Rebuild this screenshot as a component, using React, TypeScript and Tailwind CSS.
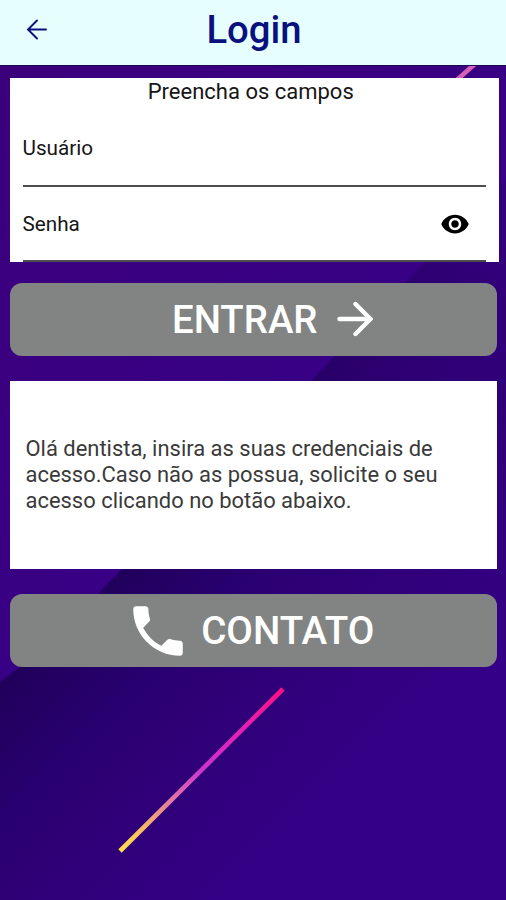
import { MdPhone, MdVisibility } from "react-icons/md"

function Background() {
  return (
    <svg className="absolute inset-0 -z-10 h-full w-full" viewBox="0 0 506 900" preserveAspectRatio="none">
      <defs>
        <linearGradient id="upper" x1="0" y1="65" x2="300" y2="365" gradientUnits="userSpaceOnUse">
          <stop offset="0" stopColor="#3b007c" />
          <stop offset="1" stopColor="#380084" />
        </linearGradient>
        <linearGradient id="lower" x1="60" y1="620" x2="300" y2="860" gradientUnits="userSpaceOnUse">
          <stop offset="0" stopColor="#20005a" />
          <stop offset="0.3" stopColor="#290070" />
          <stop offset="0.6" stopColor="#30007a" />
          <stop offset="1" stopColor="#350088" />
        </linearGradient>
        <linearGradient id="fade" x1="150" y1="540" x2="480" y2="210" gradientUnits="userSpaceOnUse">
          <stop offset="0" stopColor="#32007a" stopOpacity="0" />
          <stop offset="0.5" stopColor="#32007a" stopOpacity="0.4" />
          <stop offset="0.85" stopColor="#32007a" stopOpacity="0.8" />
          <stop offset="1" stopColor="#34007c" />
        </linearGradient>
        <linearGradient id="streak" x1="120" y1="851" x2="283" y2="689" gradientUnits="userSpaceOnUse">
          <stop offset="0" stopColor="#ffe04a" />
          <stop offset="0.15" stopColor="#f5b868" />
          <stop offset="0.35" stopColor="#dd6aae" />
          <stop offset="0.5" stopColor="#c935cc" />
          <stop offset="0.75" stopColor="#e51fb4" />
          <stop offset="1" stopColor="#ff0f84" />
        </linearGradient>
      </defs>
      <rect width="506" height="900" fill="url(#upper)" />
      <path d="M0 682L20 667L97 595L122 569L312 380L335 356L424 263L506 181V900H0Z" fill="url(#lower)" />
      <path d="M97 595L122 569L312 380L335 356L424 263L506 181V600H97Z" fill="url(#fade)" />
      <path d="M120 851L283 689" stroke="url(#streak)" strokeWidth="4.6" />
      <path d="M440 95L476 63" stroke="#d45fb5" strokeWidth="4.6" />
    </svg>
  )
}

export default function App() {
  return (
    <div className="relative isolate flex h-[900px] w-[506px] flex-col overflow-hidden font-['Roboto',sans-serif]">
      <Background />

      <header className="grid h-[66px] grid-cols-[1fr_auto_1fr] items-center border-b border-[#1d0850] bg-[#e7feff] text-[#09117e]">
        <button className="ml-[26px] w-[22px] pb-[7px]" aria-label="Voltar">
          <svg
            className="h-[22px] w-[22px]"
            viewBox="0 0 22 22"
            fill="none"
            stroke="currentColor"
            strokeWidth="1.9"
            strokeLinecap="round"
          >
            <path d="M20 11.5H2.2M11 2.5L2 11.5L11 20.5" />
          </svg>
        </button>
        <h1 className="pb-[4px] pl-[2px] text-[38.3px] leading-none font-medium">Login</h1>
      </header>

      <main className="flex flex-col pt-[12px] pr-[9px] pl-[9.5px]">
        <section className="mr-[-2px] h-[184px] bg-white px-[13px] text-[20.7px] leading-[26px] text-[#161616]">
          <p className="pt-px pr-[7px] text-center text-[22px]">Preencha os campos</p>
          <div className="mr-[0.5px] flex h-[81.5px] items-center border-b-2 border-[#4d4d4d] pt-[6px]">Usuário</div>
          <div className="flex h-[75.5px] items-center justify-between border-b-2 border-[#4d4d4d] pt-[2px] pr-[16px]">
            <span>Senha</span>
            <MdVisibility className="h-[30px] w-[30px] text-black" />
          </div>
        </section>

        <button className="mt-[20.5px] flex h-[73px] items-center justify-center gap-[19px] rounded-[12px] bg-[#828484] pl-[38px] text-[38.4px] font-medium text-white">
          <span className="pt-[2px]">ENTRAR</span>
          <svg
            className="h-[36px] w-[36px]"
            viewBox="0 0 36 36"
            fill="none"
            stroke="currentColor"
            strokeWidth="4.4"
            strokeLinecap="round"
          >
            <path d="M2.5 18H32.5M18.5 3L33.4 18L18.5 33" />
          </svg>
        </button>

        <section className="mt-[25.5px] flex h-[187.5px] items-center bg-white px-[16px] pt-px text-[21.95px] leading-[26px] text-[#3a3a3a]">
          <p>
            Olá dentista, insira as suas credenciais de
            <br />
            acesso.Caso não as possua, solicite o seu
            <br />
            acesso clicando no botão abaixo.
          </p>
        </section>

        <button className="mt-[25.5px] flex h-[73px] items-center justify-center gap-[10px] rounded-[12px] bg-[#828484] pr-[7px] text-[38.6px] font-medium text-white">
          <MdPhone className="h-[66px] w-[66px]" />
          CONTATO
        </button>
      </main>
    </div>
  )
}
